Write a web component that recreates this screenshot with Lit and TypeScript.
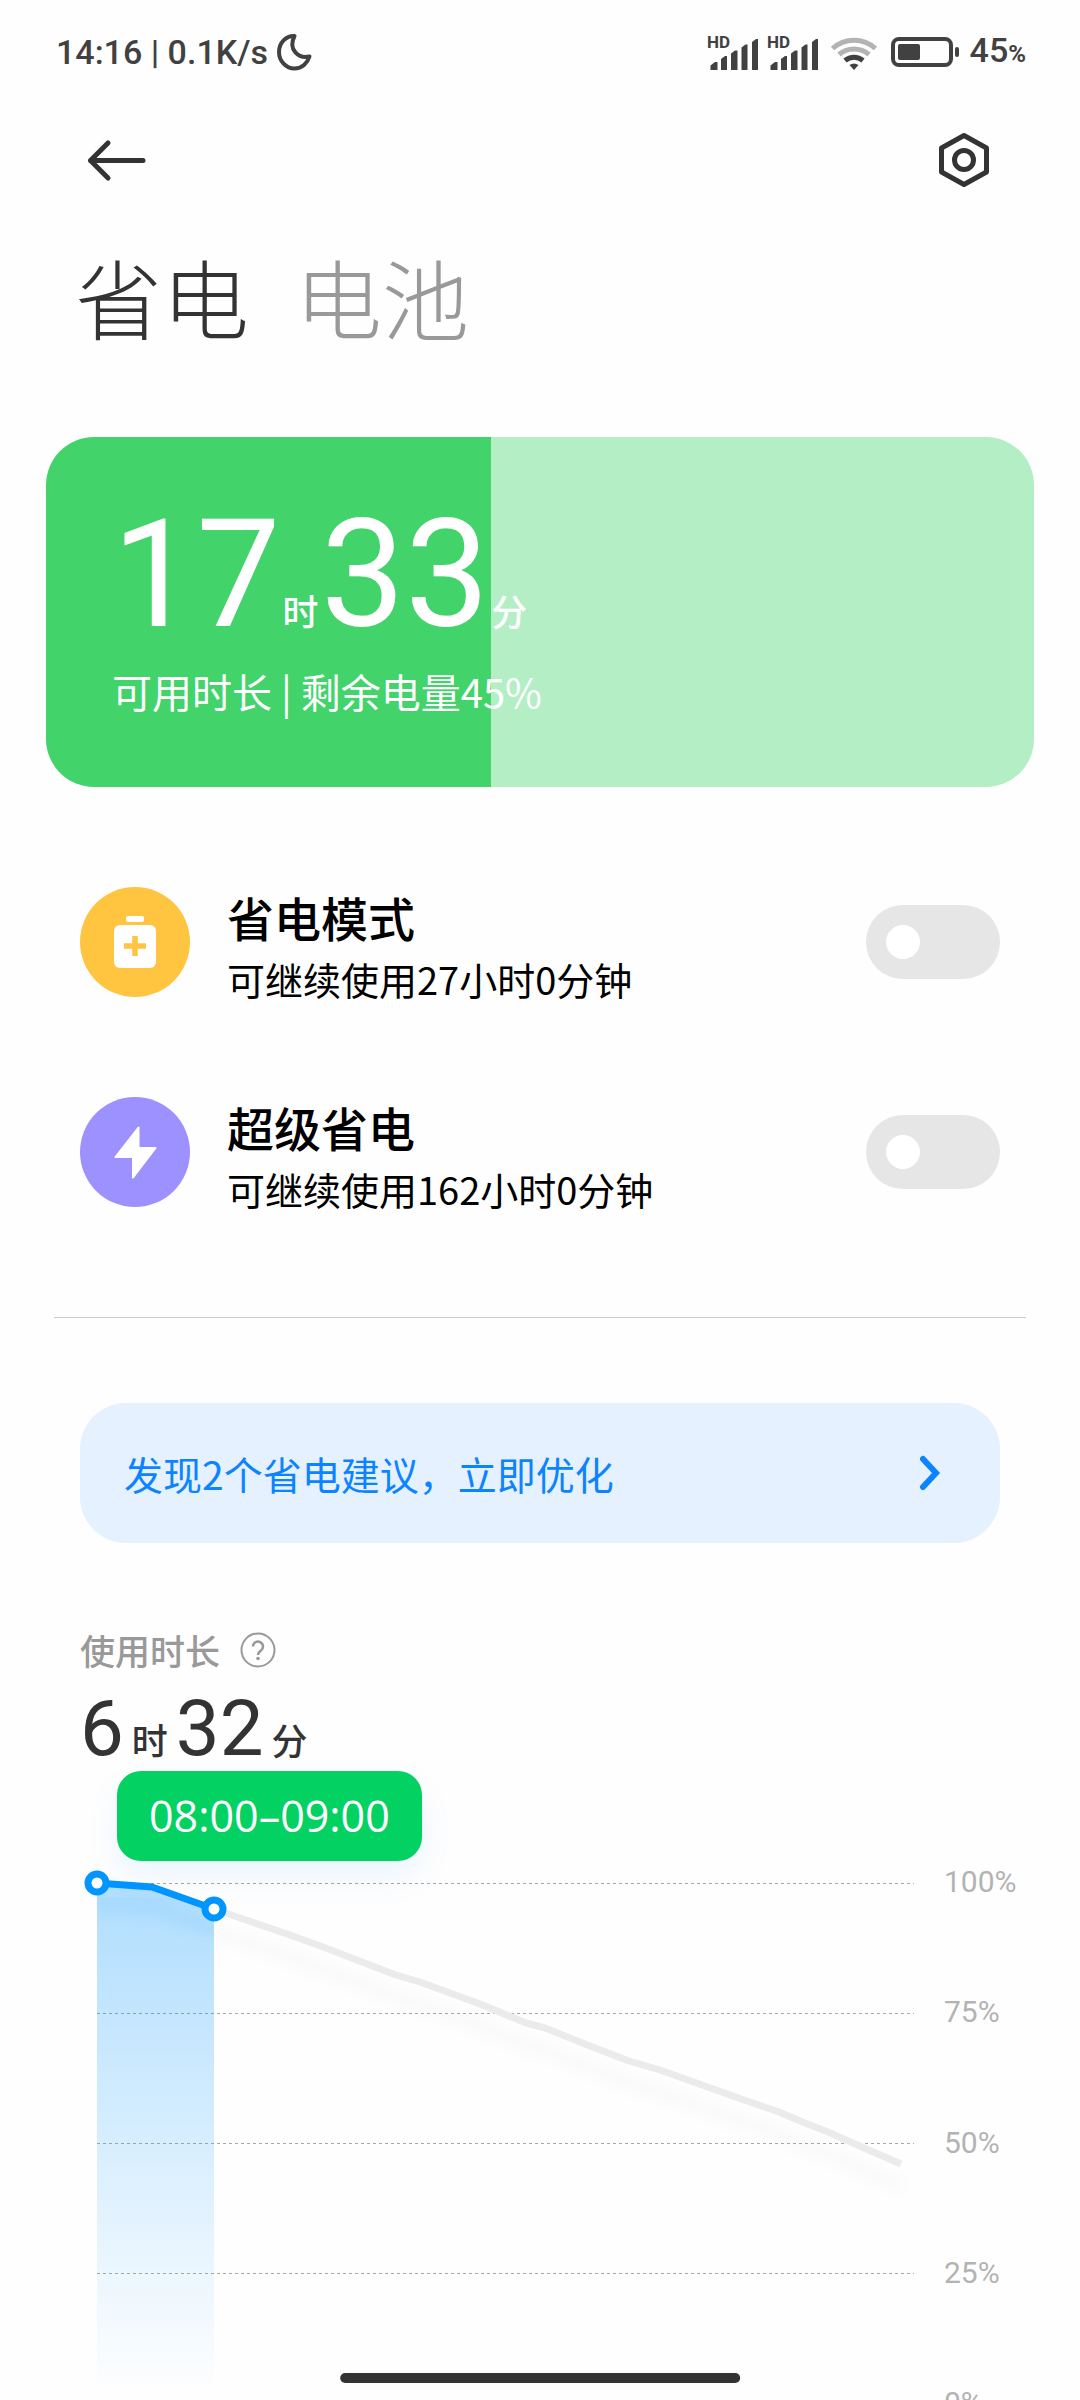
import { LitElement, html, svg, css } from "lit";
import { customElement, property } from "lit/decorators.js";

interface Mode {
  id: string;
  title: string;
  note: string;
  tone: string;
}

const MODES: Mode[] = [
  { id: "saver", title: "省电模式", note: "可继续使用27小时0分钟", tone: "amber" },
  { id: "ultra", title: "超级省电", note: "可继续使用162小时0分钟", tone: "violet" },
];

const LEVELS = ["100%", "75%", "50%", "25%", "0%"];

/* Battery level over time, in chart units: 130 units are 25 percent. */
const USED: number[][] = [[17, 43], [72, 47], [134, 69]];
const REST: number[][] = [
  [134, 69], [210, 95], [243, 107], [316, 135], [340, 142], [400, 164], [446, 183],
  [465, 188], [515, 208], [549, 221], [580, 230], [664, 260], [699, 272], [725, 283],
  [748, 292], [784, 308], [821, 324],
];

const toPath = (pts: number[][]) => "M" + pts.map((p) => p.join(" ")).join("L");

@customElement("status-bar")
export class StatusBar extends LitElement {
  static styles = css`
    :host {
      display: flex;
      justify-content: space-between;
      align-items: center;
      height: 104px;
      padding: 0 54px 0 56px;
      color: #414141;
      font-family: Roboto, "Noto Sans CJK SC", sans-serif;
      font-weight: 500;
      font-size: 34px;
      line-height: 48px;
      white-space: nowrap;
    }
    .group { display: flex; align-items: center; }
    .right { gap: 10px; }
    .level { display: flex; align-items: baseline; }
    .unit { font-size: 24px; font-weight: 700; }
    .hd { font-size: 17px; font-weight: 700; }
    svg { display: block; flex: none; overflow: visible; }
    .moon { margin-left: 8px; }
  `;

  private signal() {
    return html`<svg width="50" height="36" viewBox="0 0 50 36" fill="#414141">
      <text class="hd" x="-1" y="14">HD</text>
      <path d="M2.500 31.500l4.500-3.500h2.500v8h-7z" />
      <path d="M13 25l4-3h2v14h-6z" />
      <path d="M23 19.500l4-3h2.500V36H23z" />
      <path d="M33.500 13.500l4-3h2V36h-6z" />
      <path d="M44 8l4-3h2v31h-6z" />
    </svg>`;
  }

  render() {
    return html`
      <div class="group">
        <span>14:16 | 0.1K/s</span>
        <svg class="moon" width="36" height="38" viewBox="0 0 36 38" fill="none" stroke="#414141"
          stroke-width="4" stroke-linejoin="round">
          <path d="M18.500 3C10 2.500 3 10 3 19s7 16.500 15.500 16.500C26 35.500 31.500 30 33.500 23.500 23 26 11.500 17 18.500 3z" />
        </svg>
      </div>
      <div class="group right">
        ${this.signal()}${this.signal()}
        <svg width="52" height="36" viewBox="0 0 52 36" fill="none" stroke-width="5">
          <path stroke="#b3b3b3" d="M4.500 14.500a32 32 0 0 1 43 0" />
          <path stroke="#b3b3b3" d="M11 20.500a23 23 0 0 1 30 0" />
          <path stroke="#414141" d="M17 26.500a14 14 0 0 1 18 0" />
          <path fill="#414141" d="M21.500 31q4.500-3 9 0L26 36z" />
        </svg>
        <svg width="70" height="32" viewBox="0 0 70 32">
          <rect x="3" y="3" width="58" height="26" rx="6" fill="none" stroke="#414141" stroke-width="4" />
          <rect x="8" y="8" width="22" height="16" rx="2" fill="#414141" />
          <rect x="65" y="11" width="4" height="10" rx="2" fill="#414141" />
        </svg>
        <span class="level">45<span class="unit">%</span></span>
      </div>
    `;
  }
}

@customElement("mode-row")
export class ModeRow extends LitElement {
  @property({ attribute: false }) mode!: Mode;

  static styles = css`
    :host { display: block; }
    .row {
      display: grid;
      grid-template-columns: 110px 1fr auto;
      grid-template-rows: 110px;
      column-gap: 37px;
      align-items: center;
      color: #000;
    }
    .badge { width: 110px; height: 110px; border-radius: 50%; }
    .amber { background: #ffc540; }
    .violet { background: #9d91ff; }
    svg { display: block; }
    .text { display: flex; flex-direction: column; align-self: start; }
    .title { font-size: 47px; line-height: 60px; font-weight: 500; }
    .note { font-size: 38px; line-height: 64px; }
    input {
      appearance: none;
      width: 134px;
      height: 74px;
      margin: 0;
      padding: 20px;
      box-sizing: border-box;
      border-radius: 37px;
      background: #e6e6e6;
      display: flex;
    }
    input::before {
      content: "";
      width: 34px;
      height: 34px;
      border-radius: 50%;
      background: #fff;
    }
    input:checked { background: #42d36a; justify-content: flex-end; }
  `;

  private glyph() {
    return this.mode.tone === "amber"
      ? html`<svg viewBox="0 0 110 110" fill="#fff">
          <rect x="46" y="29" width="18" height="6" rx="2" />
          <rect x="34" y="38" width="42" height="43" rx="6" />
          <path d="M55 49v20M44 59h22" stroke="#ffc540" stroke-width="5.500" fill="none" />
        </svg>`
      : html`<svg viewBox="0 0 110 110" fill="#fff" stroke="#fff" stroke-width="2" stroke-linejoin="round">
          <path d="M58.500 30.500v20.500h17L53 80.500V60H35.500z" />
        </svg>`;
  }

  render() {
    const m = this.mode;
    return html`<div class="row">
      <div class="badge ${m.tone}">${this.glyph()}</div>
      <label class="text" for=${m.id}>
        <span class="title">${m.title}</span>
        <span class="note">${m.note}</span>
      </label>
      <input type="checkbox" role="switch" id=${m.id} />
    </div>`;
  }
}

@customElement("battery-chart")
export class BatteryChart extends LitElement {
  static styles = css`
    :host { display: block; position: relative; }
    .plot { display: grid; grid-template-columns: 834fr 136fr; column-gap: 30px; }
    svg { display: block; width: 100%; overflow: visible; }
    .levels {
      display: flex;
      flex-direction: column;
      justify-content: space-between;
      margin: 0;
      padding: 22px 0 0;
      list-style: none;
      color: #b3b3b3;
      font-family: Roboto, sans-serif;
      font-size: 30px;
      line-height: 40px;
    }
    .tip {
      position: absolute;
      left: 37px;
      top: -69px;
      padding: 0 32px;
      border-radius: 24px;
      background: #03d162;
      color: #fff;
      font-family: "Open Sans", sans-serif;
      font-size: 43px;
      line-height: 90px;
      white-space: nowrap;
      box-shadow: 0 16px 32px rgba(0, 140, 255, 0.08);
    }
  `;

  render() {
    return html`
      <div class="plot">
        <svg viewBox="0 0 834 583" role="img" aria-label="电量">
          <defs>
            <linearGradient id="fade" x1="0" y1="43" x2="0" y2="555" gradientUnits="userSpaceOnUse">
              <stop offset="0" stop-color="#0095ff" stop-opacity=".31" />
              <stop offset="1" stop-color="#0095ff" stop-opacity="0" />
            </linearGradient>
            <filter id="soft" x="-10%" y="-20%" width="120%" height="150%">
              <feGaussianBlur stdDeviation="7" />
            </filter>
            <clipPath id="under"><path d="${toPath(USED)}V583H17z" /></clipPath>
          </defs>
          ${[43, 173, 303, 433].map(
            (y) => svg`<path d="M17 ${y + 0.5}H834" stroke="#a8a8a8" stroke-dasharray="3 3" />`
          )}
          <path d="${toPath(USED)}V563H17z" fill="url(#fade)" />
          <g clip-path="url(#under)">
            <path d=${toPath(USED)} transform="translate(0 20)" fill="none" stroke="#0095ff"
              stroke-opacity=".1" stroke-width="12" filter="url(#soft)" />
          </g>
          <path d=${toPath(REST)} transform="translate(0 22)" fill="none" stroke="#000"
            stroke-opacity=".024" stroke-width="12" filter="url(#soft)" />
          <path d=${toPath(REST)} fill="none" stroke="#ebebeb" stroke-width="7" stroke-linejoin="round" />
          <path d=${toPath(USED)} fill="none" stroke="#0095ff" stroke-width="7" stroke-linejoin="round" />
          ${[USED[0], USED[2]].map(
            ([x, y]) => svg`<circle cx=${x} cy=${y} r="9" fill="#fff" stroke="#0095ff" stroke-width="7" />`
          )}
        </svg>
        <ul class="levels">${LEVELS.map((l) => html`<li>${l}</li>`)}</ul>
      </div>
      <div class="tip">08:00–09:00</div>
    `;
  }
}

@customElement("app-root")
export class AppRoot extends LitElement {
  static styles = css`
    :host {
      display: block;
      position: relative;
      height: 100vh;
      overflow: hidden;
      background: #fefefe;
      color: #333;
      font-family: "Noto Sans CJK SC", sans-serif;
    }
    svg { display: block; }
    button { border: 0; padding: 0; margin: 0; background: none; font: inherit; color: inherit; }
    .bar {
      display: flex;
      justify-content: space-between;
      align-items: center;
      height: 112px;
      padding: 0 86px;
    }
    .tabs {
      display: flex;
      gap: 46px;
      padding: 16px 75px 0;
      height: 203px;
      font-size: 87px;
      line-height: 128px;
      font-weight: 300;
      box-sizing: border-box;
      align-items: flex-start;
    }
    .tabs .off { color: #999; }
    .card {
      margin: 18px 46px 0;
      padding: 68px 66px 66px;
      border-radius: 48px;
      color: #fff;
      overflow: hidden;
    }
    .time { display: flex; align-items: baseline; }
    .big { font-family: Roboto, sans-serif; font-size: 150px; line-height: 140px; }
    .mid { font-family: Roboto, sans-serif; font-size: 78px; line-height: 106px; }
    .hm { margin: 0 8px; font-size: 36px; line-height: 48px; font-weight: 500; }
    .card .hm { margin: 0 2px; }
    .sub { margin: 0; font-size: 40px; line-height: 60px; padding-top: 16px; }
    .modes { display: grid; row-gap: 100px; padding: 100px 80px 0; }
    hr { height: 1px; border: 0; margin: 110px 54px 0; background: #ccc; }
    .advice {
      display: flex;
      justify-content: space-between;
      align-items: center;
      height: 140px;
      margin: 85px 80px 0;
      padding: 0 59px 0 44px;
      border-radius: 46px;
      background: #e5f1ff;
      color: #0d84ff;
      font-size: 39px;
      text-decoration: none;
    }
    .usage { padding: 81px 0 0 80px; }
    .caption {
      display: flex;
      align-items: center;
      gap: 20px;
      margin: 0;
      color: #999;
      font-size: 35px;
      line-height: 52px;
      font-weight: 500;
    }
    .usage .time { padding-bottom: 58px; }
    .home {
      position: absolute;
      left: 50%;
      bottom: 17px;
      width: 37%;
      height: 10px;
      border-radius: 5px;
      background: #333;
      transform: translateX(-50%);
    }
  `;

  render() {
    return html`
      <status-bar></status-bar>
      <nav class="bar">
        <button aria-label="返回">
          <svg width="60" height="44" viewBox="0 0 60 44" fill="none" stroke="#333" stroke-width="5"
            stroke-linecap="round" stroke-linejoin="round">
            <path d="M57 22.500H4.500M22 5L4.500 22.500 22 40" />
          </svg>
        </button>
        <button aria-label="设置">
          <svg width="60" height="60" viewBox="0 0 60 60" fill="none" stroke="#333" stroke-width="5"
            stroke-linejoin="round">
            <path d="M30 5.500L52.500 18v24L30 54.500 7.500 42V18z" />
            <circle cx="30" cy="30" r="9.500" />
          </svg>
        </button>
      </nav>
      <div class="tabs" role="tablist">
        <button role="tab" aria-selected="true">省电</button>
        <button class="off" role="tab" aria-selected="false">电池</button>
      </div>
      <section class="card" style="background: linear-gradient(to right, #42d36a 45%, #b3eec5 45%)">
        <div class="time">
          <span class="big">17</span><span class="hm">时</span>
          <span class="big">33</span><span class="hm">分</span>
        </div>
        <p class="sub">可用时长 | 剩余电量45%</p>
      </section>
      <section class="modes">
        ${MODES.map((m) => html`<mode-row .mode=${m}></mode-row>`)}
      </section>
      <hr />
      <a class="advice" href="#">
        <span>发现2个省电建议，立即优化</span>
        <svg width="22" height="36" viewBox="0 0 22 36" fill="none" stroke="#0d84ff" stroke-width="6">
          <path d="M4 4l13 14L4 32" stroke-linecap="round" />
        </svg>
      </a>
      <section class="usage">
        <p class="caption">
          使用时长
          <svg width="36" height="36" viewBox="0 0 36 36" fill="none" stroke="#999" stroke-width="2">
            <circle cx="18" cy="18" r="16.500" />
            <path d="M13 14.500a5 5 0 1 1 8 4c-2 1.500-3 2-3 4.500" stroke-width="2.500" />
            <circle cx="18" cy="26.500" r="1.800" fill="#999" stroke="none" />
          </svg>
        </p>
        <div class="time">
          <span class="mid">6</span><span class="hm">时</span>
          <span class="mid">32</span><span class="hm">分</span>
        </div>
        <battery-chart></battery-chart>
      </section>
      <div class="home"></div>
    `;
  }
}
